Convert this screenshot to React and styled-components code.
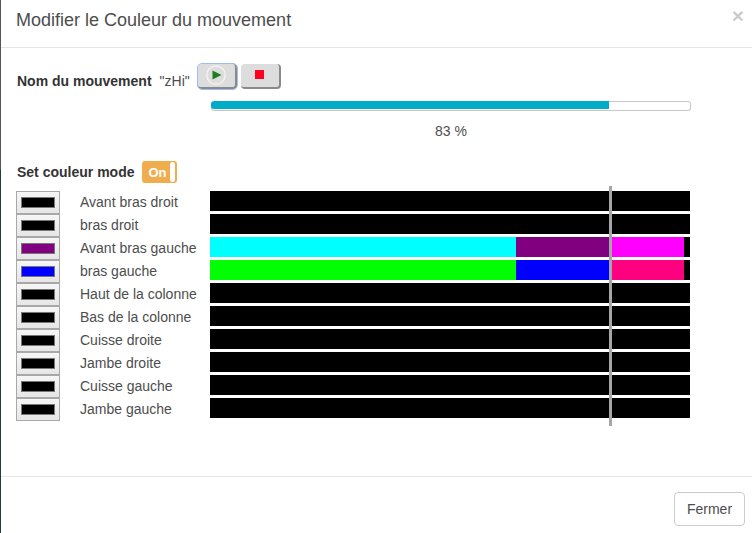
import { Fragment } from "react";
import styled, { createGlobalStyle } from "styled-components";

const GlobalStyle = createGlobalStyle`
  html, body {
    margin: 0;
    padding: 0;
    height: 533px;
    overflow: hidden;
    background: #fff;
  }
  * {
    box-sizing: border-box;
  }
`;

const Modal = styled.div`
  width: 752px;
  height: 533px;
  display: flex;
  flex-direction: column;
  background: #fff;
  border-left: 1px solid #1f3f3f;
  border-image: linear-gradient(#555 170px, #1f3f3f 170px) 1;
  font-family: "Liberation Sans", Arial, sans-serif;
  font-size: 14px;
  color: #4d4d4d;
`;

const Header = styled.div`
  height: 48px;
  flex: none;
  display: flex;
  justify-content: space-between;
  padding: 10px 8px 0 15px;
  border-bottom: 1px solid #e5e5e5;
`;

const Title = styled.h4`
  margin: 0;
  font-size: 18px;
  font-weight: 400;
  line-height: 20px;
`;

const Close = styled.span`
  font-size: 21px;
  font-weight: 700;
  line-height: 12px;
  color: #000;
  opacity: 0.2;
`;

const Body = styled.div`
  flex: 1;
  padding: 15px 0 0 15px;
`;

const NameRow = styled.div`
  display: flex;
  align-items: flex-start;
  height: 26px;
  line-height: 16px;
`;

const Strong = styled.b`
  font-weight: 700;
  color: #333;
`;

const NameLabel = styled(Strong)`
  margin: 10px 0 0 1px;
`;

const NameValue = styled.span`
  margin: 10px 0 0 8px;
`;

const PlayerButton = styled.button`
  width: ${({ $width }) => $width}px;
  height: 25px;
  padding: 0 0 2px;
  margin: 1px 0 0 ${({ $gap }) => $gap}px;
  display: flex;
  align-items: center;
  justify-content: center;
  background: #ddd;
  border: none;
  border-right: 2px solid #8a8a8a;
  border-bottom: 2px solid #8a8a8a;
  border-radius: 4px;
  outline: ${({ $focused }) => ($focused ? "1px solid #9dbcf5" : "none")};
`;

const ProgressWrap = styled.div`
  margin: 12px 0 0 195px;
  width: 480px;
  text-align: center;
`;

const ProgressTrack = styled.div`
  height: 10px;
  background: #fff;
  box-shadow: inset 0 0 0 1px #c8c8c8;
  border-radius: 3px;
  overflow: hidden;
`;

const ProgressFill = styled.div`
  height: 8px;
  background: #00acc8;
  border-radius: 3px 0 0 3px;
`;

const Percent = styled.div`
  margin-top: 12px;
  line-height: 16px;
`;

const ModeRow = styled.div`
  display: flex;
  align-items: center;
  height: 22px;
  margin: 22px 0 8px 1px;
`;

const Toggle = styled.div`
  width: 35px;
  height: 22px;
  margin-left: 8px;
  display: flex;
  align-items: center;
  justify-content: space-between;
  padding: 0 2px 0 6px;
  background: #f0ad4e;
  border-radius: 3px;
  color: #fff;
  font-size: 13px;
  font-weight: 700;
`;

const ToggleHandle = styled.span`
  width: 5px;
  height: 20px;
  background: #fff;
  border-radius: 3px;
`;

const Tracks = styled.div`
  display: grid;
  grid-template-columns: 44px 150px 480px;
  grid-auto-rows: 23px;
  position: relative;
  width: 674px;
`;

const SwatchButton = styled.button`
  width: 44px;
  height: 23px;
  padding: 0;
  display: flex;
  align-items: center;
  justify-content: center;
  background: linear-gradient(#f6f6f6, #e6e6e6);
  border: 1px solid #a8a8a8;
`;

const Swatch = styled.span`
  width: 34px;
  height: 11px;
  background: ${({ $color }) => $color};
  border: 1px solid #777;
`;

const TrackLabel = styled.div`
  padding-left: 20px;
  line-height: 23px;
  white-space: nowrap;
`;

const TrackBar = styled.div`
  height: 20px;
  display: flex;
  background: #000;
`;

const Segment = styled.div`
  height: 100%;
  background: ${({ $color }) => $color};
`;

const Playhead = styled.div`
  position: absolute;
  left: 593px;
  top: -5px;
  bottom: -5px;
  width: 3px;
  background: #a6a6a6;
`;

const Footer = styled.div`
  height: 57px;
  flex: none;
  display: flex;
  justify-content: flex-end;
  align-items: flex-start;
  padding: 15px 7px 0 0;
  border-top: 1px solid #e5e5e5;
`;

const CloseButton = styled.button`
  width: 71px;
  height: 34px;
  background: #fff;
  border: 1px solid #ccc;
  border-radius: 4px;
  color: #4d4d4d;
  font-family: inherit;
  font-size: 14px;
`;

const tracks = [
  { label: "Avant bras droit", color: "#000" },
  { label: "bras droit", color: "#000" },
  {
    label: "Avant bras gauche",
    color: "#800080",
    segments: [
      { color: "#00ffff", width: 306 },
      { color: "#800080", width: 95 },
      { color: "#ff00ff", width: 73 },
    ],
  },
  {
    label: "bras gauche",
    color: "#0000ff",
    segments: [
      { color: "#00ff00", width: 306 },
      { color: "#0000ff", width: 95 },
      { color: "#ff0080", width: 73 },
    ],
  },
  { label: "Haut de la colonne", color: "#000" },
  { label: "Bas de la colonne", color: "#000" },
  { label: "Cuisse droite", color: "#000" },
  { label: "Jambe droite", color: "#000" },
  { label: "Cuisse gauche", color: "#000" },
  { label: "Jambe gauche", color: "#000" },
];

const PlayIcon = () => (
  <svg width="20" height="20" viewBox="0 0 20 20">
    <circle cx="10" cy="10" r="9.2" fill="none" stroke="#f5f5f5" strokeWidth="1.2" />
    <path d="M6.5 5.5 L15.5 10 L6.5 14.5 Z" fill="#1e7d1e" />
  </svg>
);

const StopIcon = () => (
  <svg width="9" height="9" viewBox="0 0 9 9">
    <rect width="9" height="9" fill="#ff0022" />
  </svg>
);

const App = () => {
  const progress = 83;

  return (
    <>
      <GlobalStyle />
      <Modal>
        <Header>
          <Title>Modifier le Couleur du mouvement</Title>
          <Close>×</Close>
        </Header>
        <Body>
          <NameRow>
            <NameLabel>Nom du mouvement</NameLabel>
            <NameValue>"zHi"</NameValue>
            <PlayerButton $width={39} $gap={8} $focused>
              <PlayIcon />
            </PlayerButton>
            <PlayerButton $width={40} $gap={4}>
              <StopIcon />
            </PlayerButton>
          </NameRow>
          <ProgressWrap>
            <ProgressTrack>
              <ProgressFill style={{ width: `${progress}%` }} />
            </ProgressTrack>
            <Percent>{progress} %</Percent>
          </ProgressWrap>
          <ModeRow>
            <Strong>Set couleur mode</Strong>
            <Toggle>
              On
              <ToggleHandle />
            </Toggle>
          </ModeRow>
          <Tracks>
            {tracks.map((track) => (
              <Fragment key={track.label}>
                <SwatchButton>
                  <Swatch $color={track.color} />
                </SwatchButton>
                <TrackLabel>{track.label}</TrackLabel>
                <TrackBar>
                  {(track.segments || []).map((segment) => (
                    <Segment
                      key={segment.color}
                      $color={segment.color}
                      style={{ width: segment.width }}
                    />
                  ))}
                </TrackBar>
              </Fragment>
            ))}
            <Playhead />
          </Tracks>
        </Body>
        <Footer>
          <CloseButton>Fermer</CloseButton>
        </Footer>
      </Modal>
    </>
  );
};

export default App;
